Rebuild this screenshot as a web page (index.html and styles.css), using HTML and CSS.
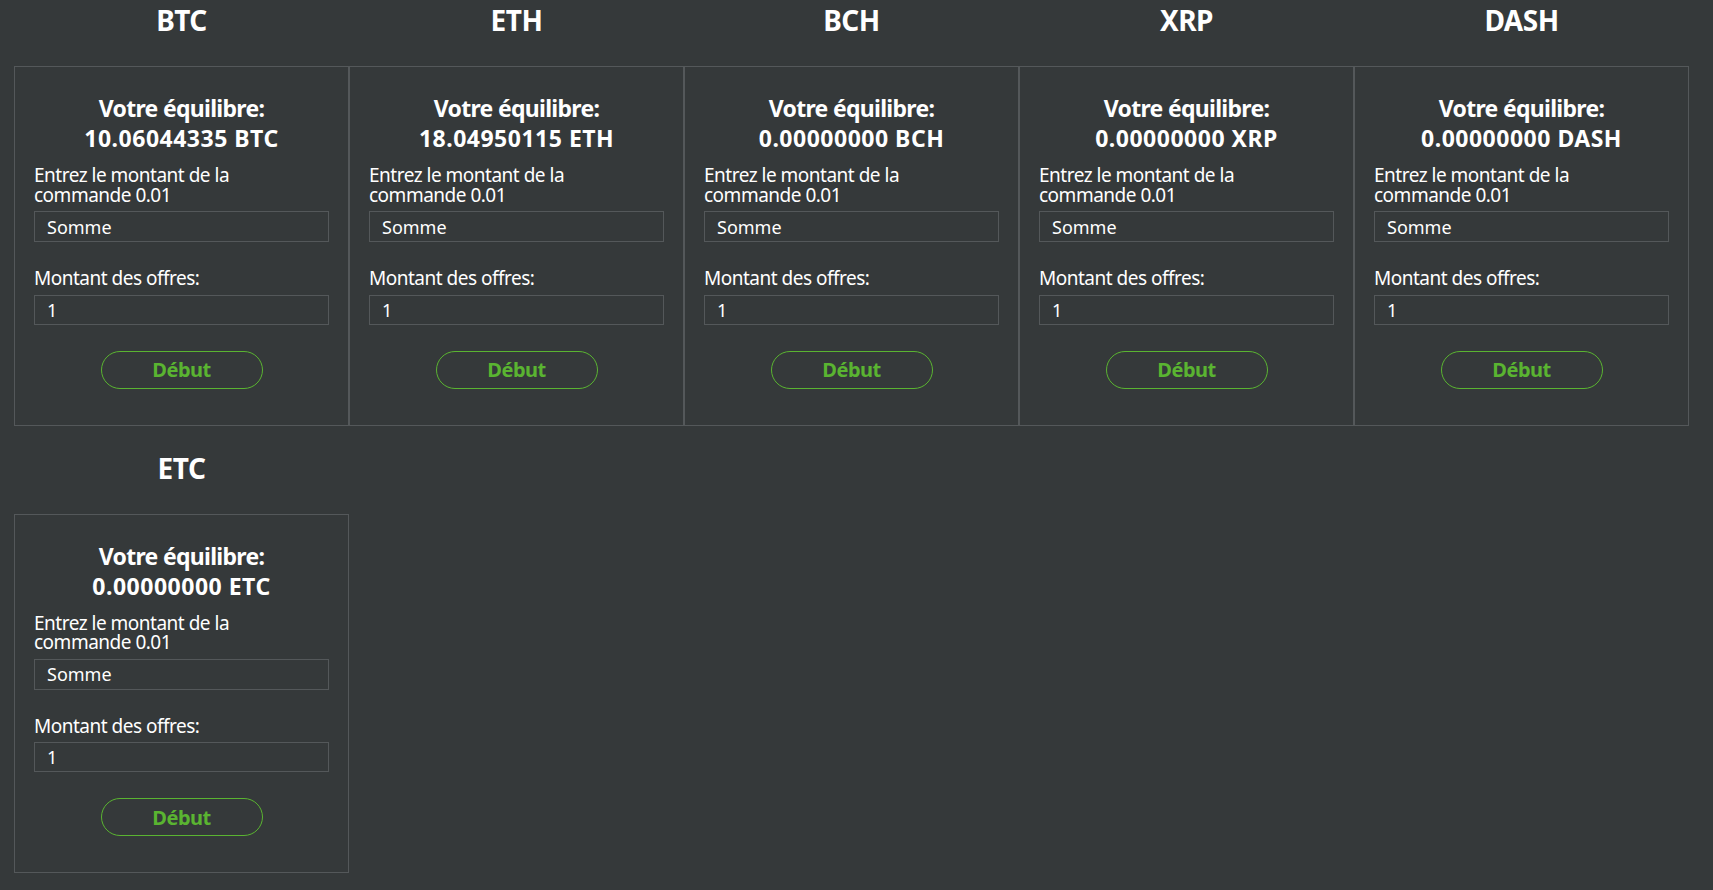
FILE: index.html
```html
<!DOCTYPE html>
<html lang="fr">
<head>
<meta charset="utf-8">
<title>Balances</title>
<link rel="stylesheet" href="styles.css">
</head>
<body>
<div class="grid">
  <section class="col">
    <h2 class="coin">BTC</h2>
    <div class="card">
      <h3 class="balance">Votre équilibre:<br><span class="amount">10.06044335 BTC</span></h3>
      <label class="lbl">Entrez le montant de la<br>commande 0.01</label>
      <input class="field f1" type="text" placeholder="Somme">
      <label class="lbl l2">Montant des offres:</label>
      <input class="field f2" type="text" value="1">
      <button class="btn">Début</button>
    </div>
  </section>
  <section class="col">
    <h2 class="coin">ETH</h2>
    <div class="card">
      <h3 class="balance">Votre équilibre:<br><span class="amount">18.04950115 ETH</span></h3>
      <label class="lbl">Entrez le montant de la<br>commande 0.01</label>
      <input class="field f1" type="text" placeholder="Somme">
      <label class="lbl l2">Montant des offres:</label>
      <input class="field f2" type="text" value="1">
      <button class="btn">Début</button>
    </div>
  </section>
  <section class="col">
    <h2 class="coin">BCH</h2>
    <div class="card">
      <h3 class="balance">Votre équilibre:<br><span class="amount">0.00000000 BCH</span></h3>
      <label class="lbl">Entrez le montant de la<br>commande 0.01</label>
      <input class="field f1" type="text" placeholder="Somme">
      <label class="lbl l2">Montant des offres:</label>
      <input class="field f2" type="text" value="1">
      <button class="btn">Début</button>
    </div>
  </section>
  <section class="col">
    <h2 class="coin">XRP</h2>
    <div class="card">
      <h3 class="balance">Votre équilibre:<br><span class="amount">0.00000000 XRP</span></h3>
      <label class="lbl">Entrez le montant de la<br>commande 0.01</label>
      <input class="field f1" type="text" placeholder="Somme">
      <label class="lbl l2">Montant des offres:</label>
      <input class="field f2" type="text" value="1">
      <button class="btn">Début</button>
    </div>
  </section>
  <section class="col">
    <h2 class="coin">DASH</h2>
    <div class="card">
      <h3 class="balance">Votre équilibre:<br><span class="amount">0.00000000 DASH</span></h3>
      <label class="lbl">Entrez le montant de la<br>commande 0.01</label>
      <input class="field f1" type="text" placeholder="Somme">
      <label class="lbl l2">Montant des offres:</label>
      <input class="field f2" type="text" value="1">
      <button class="btn">Début</button>
    </div>
  </section>
  <section class="col">
    <h2 class="coin">ETC</h2>
    <div class="card">
      <h3 class="balance">Votre équilibre:<br><span class="amount">0.00000000 ETC</span></h3>
      <label class="lbl">Entrez le montant de la<br>commande 0.01</label>
      <input class="field f1" type="text" placeholder="Somme">
      <label class="lbl l2">Montant des offres:</label>
      <input class="field f2" type="text" value="1">
      <button class="btn">Début</button>
    </div>
  </section>
</div>
</body>
</html>
```
FILE: styles.css
```css
html, body {
  margin: 0;
  background: #35393a;
  color: #ffffff;
  font-family: "Noto Sans", "Open Sans", sans-serif;
}
.grid {
  display: grid;
  grid-template-columns: repeat(5, 335px);
  row-gap: 22px;
  padding-left: 14px;
}
.col {
  display: flex;
  flex-direction: column;
}
.coin {
  margin: 0;
  height: 66px;
  font-size: 28px;
  line-height: 40px;
  font-weight: 700;
  text-align: center;
  letter-spacing: -0.5px;
}
.card {
  border: 1px solid #54585a;
  padding: 26px 19px 36px;
  display: flex;
  flex-direction: column;
}
.balance {
  margin: 0 0 13px;
  font-size: 23px;
  line-height: 30px;
  font-weight: 700;
  text-align: center;
  letter-spacing: -0.7px;
}
.amount {
  letter-spacing: 0.5px;
}
.lbl {
  display: block;
  font-size: 19px;
  line-height: 19.5px;
  letter-spacing: -0.5px;
  margin-bottom: 6px;
}
.lbl.l2 {
  margin-top: 27px;
}
.field {
  box-sizing: border-box;
  width: 100%;
  height: 31px;
  margin: 0;
  padding: 0 0 0 12px;
  border: 1px solid #54585a;
  background: transparent;
  color: #ffffff;
  font-family: inherit;
  font-size: 18px;
  outline: none;
}
.field::placeholder {
  color: #ffffff;
  opacity: 1;
}
.f2 {
  height: 30px;
}
.btn {
  align-self: center;
  box-sizing: border-box;
  width: 162px;
  height: 38px;
  margin-top: 26px;
  border: 1px solid #5ab431;
  border-radius: 19px;
  background: transparent;
  color: #5ab431;
  font-family: inherit;
  font-size: 20px;
  font-weight: 700;
  letter-spacing: -0.5px;
  cursor: pointer;
}
```
